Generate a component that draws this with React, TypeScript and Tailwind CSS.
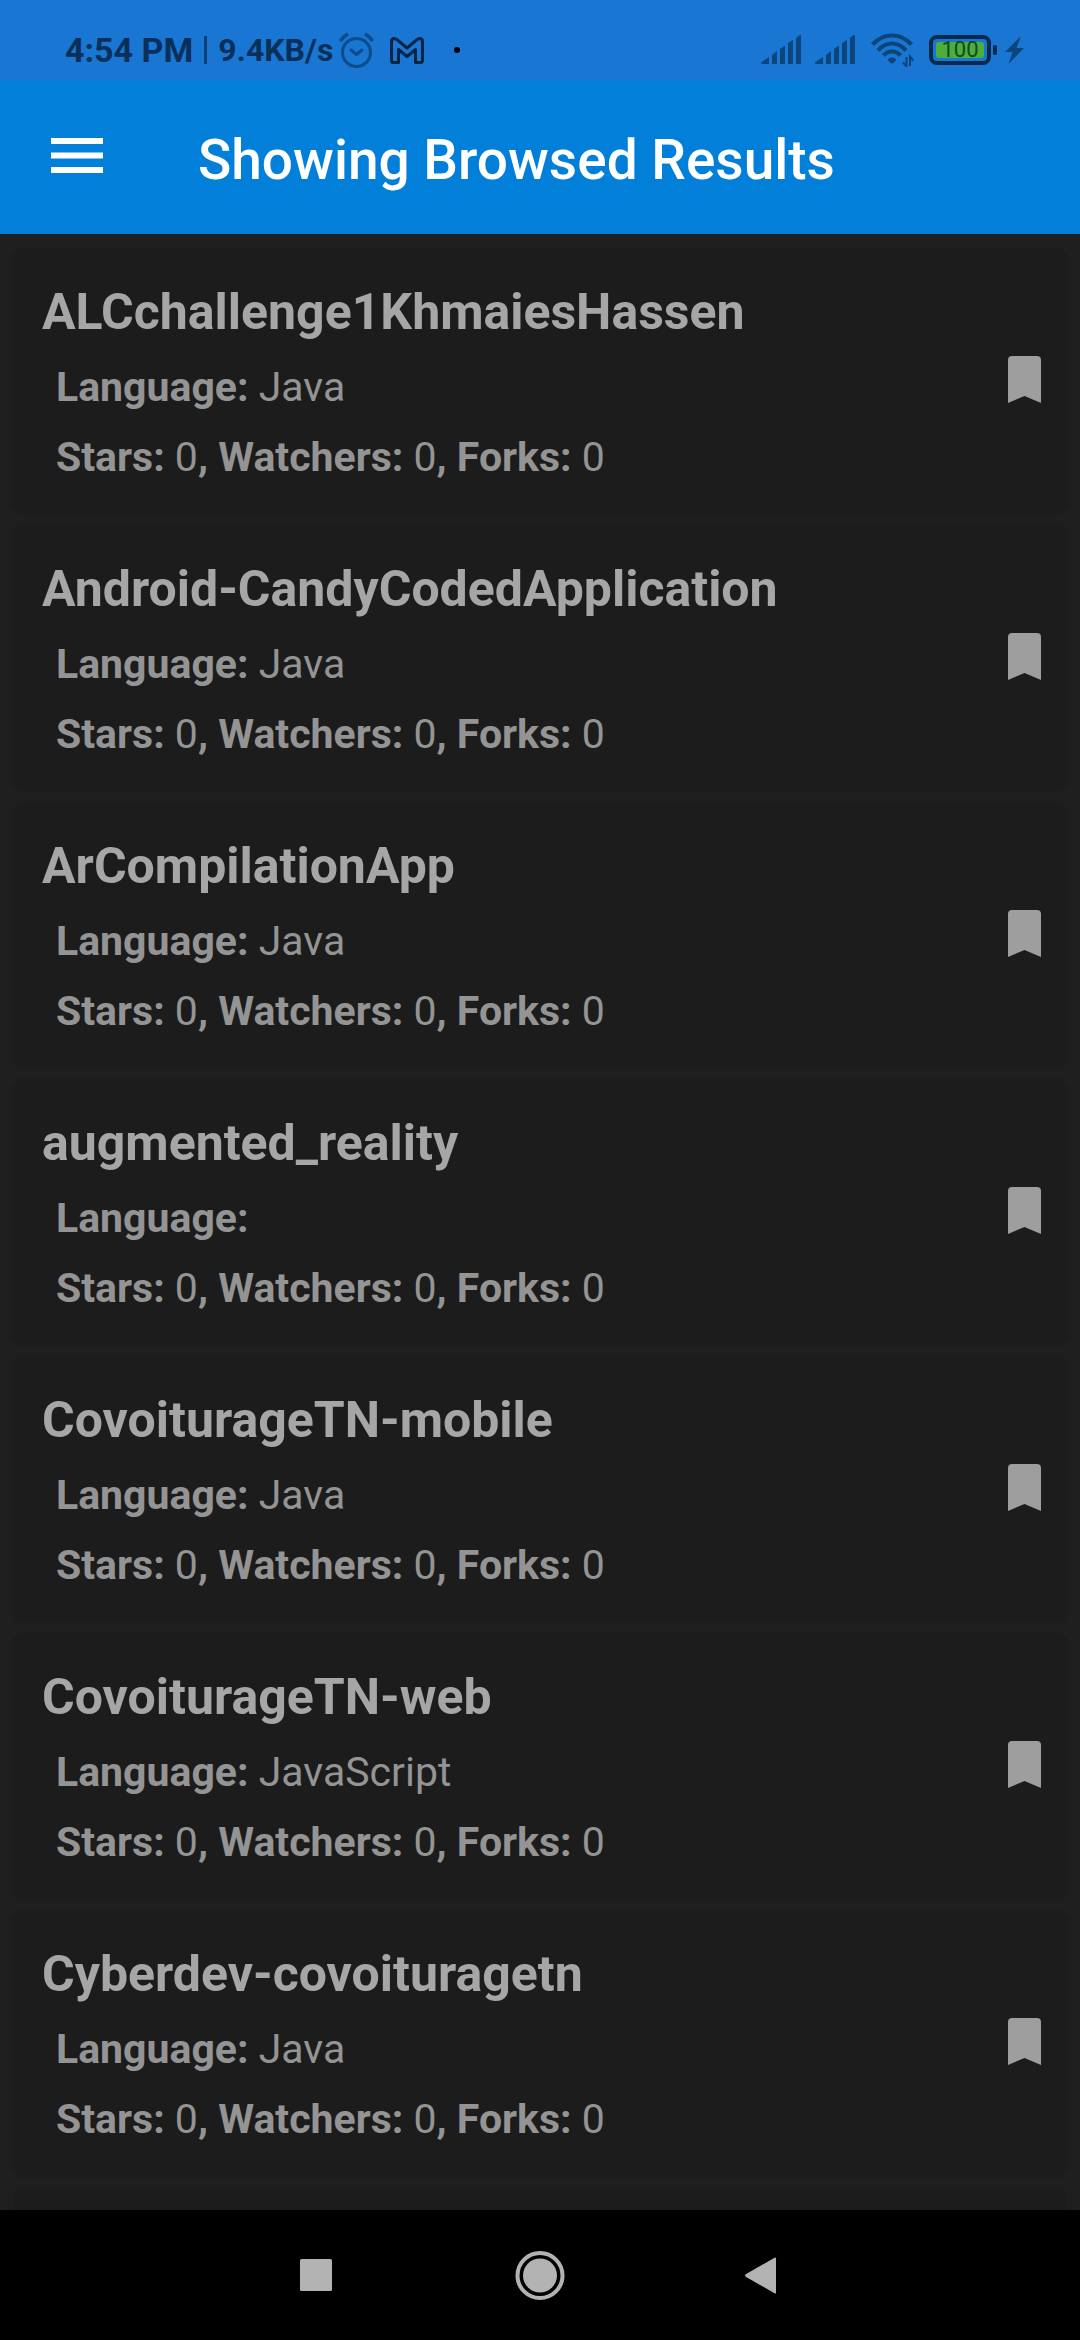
type Repo = { name: string; language: string; stars: number; watchers: number; forks: number };

const repos: Repo[] = [
  { name: "ALCchallenge1KhmaiesHassen", language: "Java", stars: 0, watchers: 0, forks: 0 },
  { name: "Android-CandyCodedApplication", language: "Java", stars: 0, watchers: 0, forks: 0 },
  { name: "ArCompilationApp", language: "Java", stars: 0, watchers: 0, forks: 0 },
  { name: "augmented_reality", language: "", stars: 0, watchers: 0, forks: 0 },
  { name: "CovoiturageTN-mobile", language: "Java", stars: 0, watchers: 0, forks: 0 },
  { name: "CovoiturageTN-web", language: "JavaScript", stars: 0, watchers: 0, forks: 0 },
  { name: "Cyberdev-covoituragetn", language: "Java", stars: 0, watchers: 0, forks: 0 },
];

function SignalIcon() {
  return (
    <svg width="40" height="30" viewBox="0 0 40 30" fill="#0b457c" aria-hidden="true">
      <path d="M0 27.5 8 22v6.5q0 .5-.5.5H1q-1 0-1-1.500Z" />
      <path d="M11 20 16 16v12.500q0 .5-.5.5h-4q-.5 0-.5-.5Z" />
      <path d="M19 14 24 10.500v18q0 .5-.5.5h-4q-.5 0-.5-.5Z" />
      <path d="M27 8 32 5v23.500q0 .5-.5.5h-4q-.5 0-.5-.5Z" />
      <path d="M35 3 38.500.3Q40-.3 40 1v27.500q0 .5-.5.5h-4q-.5 0-.5-.5Z" />
    </svg>
  );
}

function WifiIcon() {
  return (
    <svg width="43" height="34" viewBox="0 0 43 34" fill="none" stroke="#0b457c" strokeWidth="4.200" aria-hidden="true">
      <path d="M1.500 11.500Q10 2.500 21 2.500T40.500 11.500" />
      <path d="M7 17.500Q13 10.500 21 10.500T35 17.500" />
      <path d="M12.500 22.500Q16 18.500 21 18.500T29.500 22.500" />
      <path d="M17 27q0-2.500 4-2.500t4 2.500q-2 3.500-4 3.500T17 27Z" fill="#0b457c" stroke="none" />
      <path d="M35.500 24v9.500L32 29.500M39 33v-9.500L42.500 27.500" strokeWidth="2" />
    </svg>
  );
}

function AlarmIcon() {
  return (
    <svg width="35" height="36" viewBox="0 0 35 36" fill="none" stroke="#0c4c8b" strokeWidth="3" aria-hidden="true">
      <circle cx="17.500" cy="20.500" r="14" />
      <path d="M12 18l5.500 4.500L23 18" strokeLinecap="round" strokeLinejoin="round" />
      <path d="M1.500 9Q4 4.500 9 2M33.500 9Q31 4.500 26 2" strokeWidth="3.500" />
    </svg>
  );
}

function MailIcon() {
  return (
    <svg width="34" height="27" viewBox="0 0 34 27" fill="none" stroke="#072444" strokeWidth="3" strokeLinejoin="round" aria-hidden="true">
      <path d="M1.500 23.500V5Q1.500 1.500 4.500 1.500 5.500 1.500 7 2.700L17 11 27 2.700Q28.500 1.500 29.500 1.500 32.500 1.500 32.500 5V23.500Q32.500 25.500 30.500 25.500H25.500V12.500L17 19.500 8.500 12.500V25.500H3.500Q1.500 25.500 1.500 23.500Z" />
    </svg>
  );
}

function Battery() {
  return (
    <div className="flex items-center">
      <div className="flex h-[30px] w-[62px] rounded-[8px] border-4 border-[#0a2a4c] p-[3px]">
        <div className="flex flex-1 items-center justify-center rounded-[3px] bg-[#4caf3c] text-[22px] leading-4 text-[#14481f]">
          100
        </div>
      </div>
      <div className="ml-[2px] h-[10px] w-1 rounded-[2px] bg-[#0a2a4c]" />
    </div>
  );
}

function StatusBar() {
  return (
    <div className="flex h-20 shrink-0 items-center justify-between bg-[#1976d2] pt-5 pr-14 pl-[65px] text-[#0a3059]">
      <div className="flex items-center">
        <span className="text-[34px] leading-10 font-bold">4:54 PM</span>
        <span className="mx-[11px] h-7 w-[3px] bg-[#0b3f73]" />
        <span className="text-[32px] leading-10 font-bold">9.4KB/s</span>
        <span className="ml-[6px] flex items-center">
          <AlarmIcon />
          <span className="ml-4">
            <MailIcon />
          </span>
          <span className="ml-[30px] size-[6px] rounded-full bg-black" />
        </span>
      </div>
      <div className="flex items-center">
        <SignalIcon />
        <span className="ml-[14px]">
          <SignalIcon />
        </span>
        <span className="ml-4">
          <WifiIcon />
        </span>
        <span className="ml-[15px]">
          <Battery />
        </span>
        <svg className="ml-2" width="19" height="28" viewBox="0 0 19 28" fill="#0b457c" aria-hidden="true">
          <path d="M16 0 0 16h7.500L3.500 28 19 12h-7.500Z" />
        </svg>
      </div>
    </div>
  );
}

function RepoCard({ repo }: { repo: Repo }) {
  return (
    <li className="flex shrink-0 items-center rounded-[11px] bg-[#1c1c1c] pt-[35px] pr-[26px] pb-[31px] pl-[29px] shadow-[0_2px_4px_rgba(0,0,0,0.12)]">
      <div className="flex min-w-0 flex-1 flex-col gap-[22px]">
        <h2 className="text-[50px] leading-[58px] font-bold text-[#a6a6a6]">{repo.name}</h2>
        <p className="pl-[14px] text-[41px] leading-[48px] font-normal text-[#949494]">
          <b className="font-bold">Language:</b> {repo.language}
        </p>
        <p className="pl-[14px] text-[41px] leading-[48px] font-normal text-[#949494]">
          <b className="font-bold">Stars:</b> {repo.stars}
          <b className="font-bold">, Watchers:</b> {repo.watchers}
          <b className="font-bold">, Forks:</b> {repo.forks}
        </p>
      </div>
      <button type="button" aria-label={`Bookmark ${repo.name}`} className="mb-[6px] shrink-0">
        <svg width="33" height="47" viewBox="0 0 33 47" fill="#9e9e9e" aria-hidden="true">
          <path d="M4 0H29Q33 0 33 4V47L16.500 40 0 47V4Q0 0 4 0Z" />
        </svg>
      </button>
    </li>
  );
}

function NavBar() {
  return (
    <nav className="flex h-[130px] shrink-0 items-center justify-center bg-black">
      <button type="button" aria-label="Recent apps" className="flex w-[222px] justify-center">
        <svg width="50" height="50" viewBox="0 0 50 50" fill="#b3b3b3" aria-hidden="true">
          <rect x="7" y="9" width="32" height="32" rx="1.500" />
        </svg>
      </button>
      <button type="button" aria-label="Home" className="flex w-[222px] justify-center">
        <svg width="50" height="50" viewBox="0 0 50 50" fill="#b3b3b3" aria-hidden="true">
          <circle cx="25" cy="25.500" r="17" />
          <circle cx="25" cy="25.500" r="22.500" fill="none" stroke="#b3b3b3" strokeWidth="4" />
        </svg>
      </button>
      <button type="button" aria-label="Back" className="flex w-[222px] justify-center">
        <svg width="50" height="50" viewBox="0 0 50 50" fill="#b3b3b3" aria-hidden="true">
          <path d="M37.500 7.700Q39 7 39 8.500V42.500Q39 44 37.500 43.300L8.700 26.700Q7.500 25.500 8.700 24.300Z" />
        </svg>
      </button>
    </nav>
  );
}

export default function App() {
  return (
    <div className="flex h-screen flex-col overflow-hidden bg-[#1f1f1f] font-[Roboto,sans-serif]">
      <StatusBar />
      <header className="flex h-[154px] shrink-0 items-center bg-[#027fd9] pl-[51px] text-white">
        <button type="button" aria-label="Open menu">
          <svg width="52" height="35" viewBox="0 0 52 35" fill="currentColor" className="mb-1" aria-hidden="true">
            <path d="M0 0h52v6H0zM0 14.500h52v6H0zM0 29h52v6H0z" />
          </svg>
        </button>
        <h1 className="mt-[6px] ml-[95px] text-[55px] leading-[64px] font-medium">Showing Browsed Results</h1>
      </header>
      <main className="min-h-0 flex-1 overflow-y-auto [scrollbar-width:none]">
        <ul className="flex flex-col gap-[13px] px-[13px] pt-[14px]">
          {repos.map((repo) => (
            <RepoCard key={repo.name} repo={repo} />
          ))}
          <li aria-hidden="true" className="h-[264px] shrink-0 rounded-[11px] bg-[#1c1c1c]" />
        </ul>
      </main>
      <NavBar />
    </div>
  );
}
